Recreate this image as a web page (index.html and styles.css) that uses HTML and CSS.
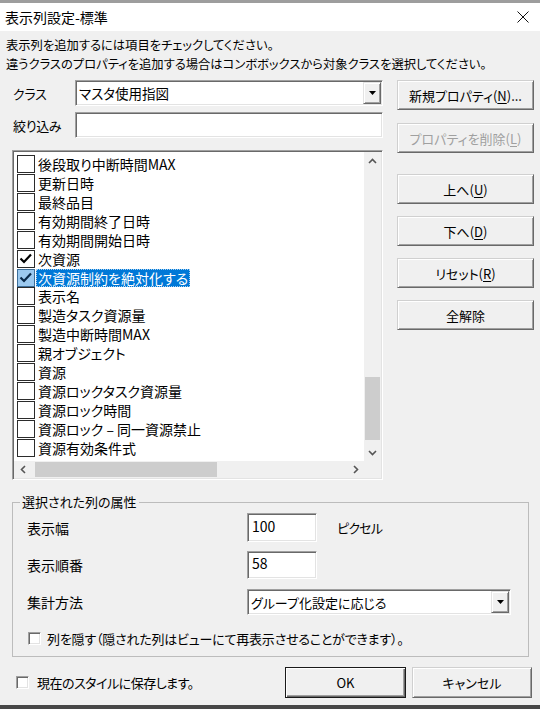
FILE: index.html
```html
<!DOCTYPE html>
<html lang="ja">
<head>
<meta charset="utf-8">
<title>表示列設定-標準</title>
<link rel="stylesheet" href="styles.css">
</head>
<body>
<div class="topstrip"></div>
<div class="titlebar">
  <span class="title">表示列設定-標準</span>
  <svg class="close" width="12" height="12" viewBox="0 0 12 12"><path d="M0.5 0.5L11.5 11.5M11.5 0.5L0.5 11.5" stroke="#111" stroke-width="1" fill="none"/></svg>
</div>
<div class="content">
  <p class="instr">表示列を追加するには項目をチェックしてください。<br>違うクラスのプロパティを追加する場合はコンボボックスから対象クラスを選択してください。</p>
  <div class="main">
    <div class="left">
      <div class="field">
        <span class="lbl">クラス</span>
        <div class="combo wide">
          <span class="combo-text cls">マスタ使用指図</span>
          <span class="dd"><svg width="7" height="4" viewBox="0 0 7 4"><polygon points="0,0 7,0 3.5,4" fill="#000"/></svg></span>
        </div>
      </div>
      <div class="field f2">
        <span class="lbl">絞り込み</span>
        <div class="input wide"></div>
      </div>
      <div class="list">
        <div class="items">
          <div class="item"><span class="cb"></span><span class="itext">後段取り中断時間MAX</span></div>
          <div class="item"><span class="cb"></span><span class="itext">更新日時</span></div>
          <div class="item"><span class="cb"></span><span class="itext">最終品目</span></div>
          <div class="item"><span class="cb"></span><span class="itext">有効期間終了日時</span></div>
          <div class="item"><span class="cb"></span><span class="itext">有効期間開始日時</span></div>
          <div class="item"><span class="cb"><svg width="16" height="16" viewBox="0 0 16 16"><polyline points="2.5,7.5 6,11 13,3.5" fill="none" stroke="#000" stroke-width="2.2"/></svg></span><span class="itext">次資源</span></div>
          <div class="item sel"><span class="cb"><svg width="16" height="16" viewBox="0 0 16 16"><polyline points="2.5,7.5 6,11 13,3.5" fill="none" stroke="#0a2a4a" stroke-width="2.2"/></svg></span><span class="itext">次資源制約を絶対化する</span></div>
          <div class="item"><span class="cb"></span><span class="itext">表示名</span></div>
          <div class="item"><span class="cb"></span><span class="itext">製造タスク資源量</span></div>
          <div class="item"><span class="cb"></span><span class="itext">製造中断時間MAX</span></div>
          <div class="item"><span class="cb"></span><span class="itext">親オブジェクト</span></div>
          <div class="item"><span class="cb"></span><span class="itext">資源</span></div>
          <div class="item"><span class="cb"></span><span class="itext">資源ロックタスク資源量</span></div>
          <div class="item"><span class="cb"></span><span class="itext">資源ロック時間</span></div>
          <div class="item"><span class="cb"></span><span class="itext">資源ロック – 同一資源禁止</span></div>
          <div class="item"><span class="cb"></span><span class="itext">資源有効条件式</span></div>
        </div>
        <div class="vscroll">
          <span class="sbtn"><svg width="9" height="6" viewBox="0 0 9 6"><polyline points="1,5 4.5,1.5 8,5" fill="none" stroke="#555" stroke-width="1.6"/></svg></span>
          <div class="vtrack"><div class="vthumb"></div></div>
          <span class="sbtn"><svg width="9" height="6" viewBox="0 0 9 6"><polyline points="1,1 4.5,4.5 8,1" fill="none" stroke="#555" stroke-width="1.6"/></svg></span>
        </div>
        <div class="hscroll">
          <span class="sbtn"><svg width="6" height="9" viewBox="0 0 6 9"><polyline points="5,1 1.5,4.5 5,8" fill="none" stroke="#555" stroke-width="1.6"/></svg></span>
          <div class="htrack"><div class="hthumb"></div></div>
          <span class="sbtn"><svg width="6" height="9" viewBox="0 0 6 9"><polyline points="1,1 4.5,4.5 1,8" fill="none" stroke="#555" stroke-width="1.6"/></svg></span>
        </div>
        <div class="corner"></div>
      </div>
    </div>
    <div class="right">
      <div class="btn">新規プロパティ(<u>N</u>)...</div>
      <div class="btn disabled b-del">プロパティを削除(<u>L</u>)</div>
      <div class="btn b-up">上へ(<u>U</u>)</div>
      <div class="btn b-next">下へ(<u>D</u>)</div>
      <div class="btn b-next">リセット(<u>R</u>)</div>
      <div class="btn b-next">全解除</div>
    </div>
  </div>
  <fieldset class="group">
    <legend>選択された列の属性</legend>
    <div class="prow r1">
      <span class="plabel">表示幅</span>
      <div class="input small">100</div>
      <span class="unit">ピクセル</span>
    </div>
    <div class="prow r2">
      <span class="plabel">表示順番</span>
      <div class="input small">58</div>
    </div>
    <div class="prow r3">
      <span class="plabel">集計方法</span>
      <div class="combo agg">
        <span class="combo-text">グループ化設定に応じる</span>
        <span class="dd"><svg width="7" height="4" viewBox="0 0 7 4"><polygon points="0,0 7,0 3.5,4" fill="#000"/></svg></span>
      </div>
    </div>
    <div class="prow r4">
      <span class="cb13"></span>
      <span class="cbtext">列を隠す（隠された列はビューにて再表示させることができます）。</span>
    </div>
  </fieldset>
  <div class="footer">
    <span class="cb13"></span>
    <span class="cbtext2">現在のスタイルに保存します。</span>
    <div class="btn ok">OK</div>
    <div class="btn cancel">キャンセル</div>
  </div>
</div>
<div class="bottomstrip"></div>
</body>
</html>
```
FILE: styles.css
```css
html, body {
  margin: 0;
  padding: 0;
}
body {
  width: 540px;
  height: 709px;
  overflow: hidden;
  background: #f0f0f0;
  font-family: "Noto Sans CJK JP", "Noto Sans", sans-serif;
  font-size: 13px;
  color: #000;
  display: flex;
  flex-direction: column;
  font-feature-settings: "palt";
}
.topstrip {
  height: 3px;
  background: #9d9d9d;
  flex: none;
}
.titlebar {
  height: 28px;
  flex: none;
  background: #fff;
  display: flex;
  align-items: center;
  justify-content: space-between;
  padding: 0 11px 0 5px;
  font-size: 14px;
  font-feature-settings: normal;
}
.content {
  flex: 1;
  display: flex;
  flex-direction: column;
}
.instr {
  margin: 0;
  padding: 5px 0 0 6px;
  line-height: 19px;
  font-size: 12.3px;
  white-space: nowrap;
}
.main {
  display: flex;
  gap: 14px;
  margin-top: 6px;
  padding-left: 12px;
}
.left {
  width: 371px;
}
.field {
  display: flex;
  align-items: center;
  height: 26px;
}
.f2 {
  margin-top: 6px;
}
.lbl {
  width: 62px;
  padding-left: 1px;
  letter-spacing: -0.3px;
}
.wide {
  width: 308px;
}
.combo, .input {
  box-sizing: border-box;
  height: 26px;
  background: #fff;
  border: 1px solid;
  border-color: #a0a0a0 #fff #fff #a0a0a0;
  box-shadow: inset 1px 1px #696969, inset -1px -1px #e3e3e3;
  display: flex;
  align-items: center;
}
.combo-text {
  flex: 1;
  padding-left: 3px;
  white-space: nowrap;
}
.combo-text.cls {
  font-size: 13.5px;
}
.dd {
  box-sizing: border-box;
  width: 18px;
  height: 22px;
  margin-right: 1px;
  background: #f0f0f0;
  border: 1px solid;
  border-color: #e3e3e3 #696969 #696969 #e3e3e3;
  box-shadow: inset 1px 1px #fff, inset -1px -1px #a0a0a0;
  display: flex;
  align-items: center;
  justify-content: center;
}
.list {
  margin-top: 12px;
  width: 371px;
  height: 330px;
  box-sizing: border-box;
  border: 1px solid;
  border-color: #a0a0a0 #fff #fff #a0a0a0;
  box-shadow: inset 1px 1px #696969, inset -1px -1px #e3e3e3;
  padding: 1px;
  background: #fff;
  display: grid;
  grid-template-columns: 1fr 17px;
  grid-template-rows: 1fr 17px;
}
.items {
  overflow: hidden;
  padding: 3px 0 0 3px;
  min-height: 0;
}
.item {
  display: flex;
  align-items: flex-start;
  height: 18.93px;
  line-height: 18px;
  font-size: 14px;
  white-space: nowrap;
}
.cb {
  box-sizing: border-box;
  width: 18px;
  height: 18px;
  flex: none;
  border: 1px solid #2b2b2b;
  background: #fff;
  display: flex;
  align-items: center;
  justify-content: center;
}
.itext {
  margin-left: 1px;
  padding: 0 2px;
  height: 18px;
}
.item.sel .cb {
  background: #9ccaf0;
  border-color: #3c6e99;
}
.item.sel .itext {
  background: #0078d7;
  color: #fff;
  outline: 1px dotted #a8d0f0;
  outline-offset: -1px;
}
.vscroll {
  background: #f0f0f0;
  display: flex;
  flex-direction: column;
  min-height: 0;
}
.sbtn {
  flex: none;
  width: 17px;
  height: 17px;
  display: flex;
  align-items: center;
  justify-content: center;
}
.vtrack {
  flex: 1;
  display: flex;
  flex-direction: column;
  justify-content: flex-end;
  padding-bottom: 4px;
}
.vthumb {
  height: 63px;
  margin: 0 1px;
  background: #cdcdcd;
}
.hscroll {
  background: #f0f0f0;
  display: flex;
}
.htrack {
  flex: 1;
  padding-left: 4px;
  display: flex;
  align-items: center;
}
.hthumb {
  width: 182px;
  height: 15px;
  background: #cdcdcd;
}
.corner {
  background: #f0f0f0;
}
.right {
  width: 137px;
  display: flex;
  flex-direction: column;
}
.btn {
  box-sizing: border-box;
  height: 30px;
  background: #f0f0f0;
  border: 1px solid;
  border-color: #d0d0d0 #696969 #696969 #d0d0d0;
  box-shadow: inset 1px 1px #fff, inset -1px -1px #a0a0a0;
  display: flex;
  align-items: center;
  justify-content: center;
  white-space: nowrap;
}
.btn u {
  text-underline-offset: 2px;
}
.disabled {
  color: #a0a0a0;
}
.b-del {
  margin-top: 13px;
}
.b-up {
  margin-top: 21px;
}
.b-next {
  margin-top: 12px;
}
.group {
  margin: 14px 11px 0 12px;
  padding: 0 14px 9px 14px;
  border: 1px solid #bcbcbc;
  min-width: 0;
}
.group legend {
  padding: 0 2px;
  margin-left: -7px;
  line-height: 16px;
}
.prow {
  display: flex;
  align-items: center;
}
.plabel {
  width: 220px;
  flex: none;
  font-size: 14px;
}
.r1 {
  margin-top: 3px;
  height: 29px;
}
.r2 {
  margin-top: 9px;
  height: 28px;
}
.r3 {
  margin-top: 10px;
  height: 26px;
}
.r4 {
  margin-top: 14px;
  height: 18px;
}
.input.small {
  width: 70px;
  height: 100%;
  padding: 0 0 4px 4px;
  font-size: 14px;
}
.unit {
  margin-left: 20px;
  letter-spacing: -0.8px;
}
.combo.agg {
  width: 264px;
}
.combo.agg .combo-text {
  padding-left: 3px;
}
.cb13 {
  box-sizing: border-box;
  width: 13px;
  height: 13px;
  flex: none;
  background: #fff;
  border: 1px solid;
  border-color: #a0a0a0 #fff #fff #a0a0a0;
  box-shadow: inset 1px 1px #696969, inset -1px -1px #e3e3e3;
}
.r4 .cb13 {
  margin-left: 1px;
}
.cbtext {
  margin-left: 6px;
  white-space: nowrap;
  letter-spacing: -0.2px;
}
.footer {
  margin-top: 10px;
  height: 31px;
  display: flex;
  align-items: center;
  padding: 0 8px 0 16px;
}
.cbtext2 {
  margin-left: 8px;
  white-space: nowrap;
  letter-spacing: -0.5px;
}
.btn.ok {
  margin-left: auto;
  width: 121px;
  height: 31px;
  border-color: #1a1a1a;
  box-shadow: inset 1px 1px #fff, inset -1px -1px #696969, inset -2px -2px #a0a0a0;
}
.btn.cancel {
  margin-left: 6px;
  width: 120px;
  height: 31px;
}
.bottomstrip {
  height: 4px;
  flex: none;
  margin-top: auto;
  background: #474747;
}
```
